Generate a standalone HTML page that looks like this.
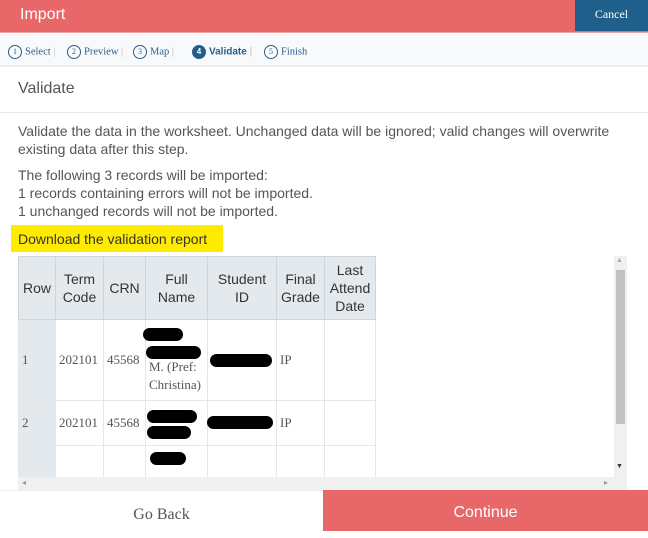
<!DOCTYPE html>
<html><head><meta charset="utf-8"><style>
*{margin:0;padding:0;box-sizing:border-box}
body{width:648px;height:531px;overflow:hidden;background:#fff;font-family:"Liberation Sans",sans-serif;position:relative;color:#555}
.abs{position:absolute}
.hdr{left:0;top:0;width:648px;height:33px;background:#e8686a;border-bottom:1px solid #f0a0a0}
.hdr .t{left:20px;top:6px;color:#fff;font-size:16px}
.cancel{left:575px;top:0;width:73px;height:31px;background:#1f5f8b;color:#fff;font-family:"Liberation Serif",serif;font-size:12px;text-align:center;line-height:28px}
.steps{left:0;top:34px;width:648px;height:33px;background:#f8f9fa;border-bottom:2px solid #eceef0;font-family:"Liberation Serif",serif;font-size:10.5px;color:#2b5f8e}
.steps span{position:absolute;top:11px;white-space:nowrap}
.c{display:inline-block;width:14px;height:14px;border:1px solid #2b5f8e;border-radius:50%;text-align:center;line-height:12px;font-size:8px;vertical-align:middle;margin-right:3px}
.c.on{background:#1f5f8b;color:#fff;font-weight:bold}
.sep{color:#bbb}
.h2{left:18px;top:80px;font-size:16px;color:#555}
.line2{left:0;top:112px;width:648px;height:1px;background:#e8e8e8}
.p{left:18px;font-size:14px;line-height:18px;color:#555;white-space:nowrap}
.dl{left:11px;top:225px;width:212px;height:27px;background:#ffeb00}
table{position:absolute;left:18px;top:256px;border-collapse:collapse;font-size:14px}
th{background:#e3e9ed;border:1px solid #cfd6db;font-weight:normal;color:#333;line-height:18px;padding:0;text-align:center}
td{border:1px solid #e6e6e6;font-family:"Liberation Serif",serif;font-size:13px;color:#555;vertical-align:middle;padding:0 3px;white-space:nowrap}
td.r{background:#e3e9ed}
.blk{position:absolute;background:#000;border-radius:8px}
.foot{top:490px;height:41px}
</style></head><body>
<div class="abs hdr"><div class="abs t">Import</div></div>
<div class="abs cancel">Cancel</div>
<div class="abs steps">
<span style="left:8px"><i class="c" style="font-style:normal">1</i>Select <b class="sep" style="font-weight:normal">|</b></span>
<span style="left:67px"><i class="c" style="font-style:normal">2</i>Preview <b class="sep" style="font-weight:normal">|</b></span>
<span style="left:133px"><i class="c" style="font-style:normal">3</i>Map <b class="sep" style="font-weight:normal">|</b></span>
<span style="left:192px;font-family:'Liberation Sans',sans-serif;font-weight:bold;font-size:10px"><i class="c on" style="font-style:normal">4</i>Validate <b class="sep" style="font-weight:normal">|</b></span>
<span style="left:264px"><i class="c" style="font-style:normal">5</i>Finish</span>
</div>
<div class="abs h2">Validate</div>
<div class="abs line2"></div>
<div class="abs p" style="top:122px">Validate the data in the worksheet. Unchanged data will be ignored; valid changes will overwrite<br>existing data after this step.</div>
<div class="abs p" style="top:166px">The following 3 records will be imported:<br>1 records containing errors will not be imported.<br>1 unchanged records will not be imported.</div>
<div class="abs dl"></div>
<div class="abs p" style="top:230px;color:#333">Download the validation report</div>
<table>
<tr style="height:63px"><th style="width:37px">Row</th><th style="width:48px">Term<br>Code</th><th style="width:42px">CRN</th><th style="width:62px">Full<br>Name</th><th style="width:69px">Student<br>ID</th><th style="width:48px">Final<br>Grade</th><th style="width:51px">Last<br>Attend<br>Date</th></tr>
<tr style="height:81px"><td class="r">1</td><td>202101</td><td>45568</td><td style="vertical-align:bottom;padding-bottom:6px;line-height:18px"><br><br>M. (Pref:<br>Christina)</td><td></td><td>IP</td><td></td></tr>
<tr style="height:45px"><td class="r">2</td><td>202101</td><td>45568</td><td></td><td></td><td>IP</td><td></td></tr>
<tr style="height:32px"><td class="r"></td><td></td><td></td><td></td><td></td><td></td><td></td></tr>
</table>
<div class="abs" style="left:0;top:477px;width:648px;height:13px;background:#fff"></div>
<div class="abs" style="left:18px;top:477px;width:596px;height:13px;background:#f0f0f0"></div>
<div class="abs" style="left:22px;top:478px;font-size:8px;color:#999">◂</div>
<div class="abs" style="left:604px;top:478px;font-size:8px;color:#999">▸</div>
<div class="abs" style="left:614px;top:256px;width:13px;height:234px;background:#f0f0f0"></div>
<div class="abs" style="left:616px;top:270px;width:9px;height:154px;background:#c1c1c1"></div>
<div class="abs" style="left:616px;top:257px;font-size:7px;color:#aaa">▲</div>
<div class="abs" style="left:616px;top:463px;font-size:7px;color:#333">▼</div>
<div class="blk" style="left:143px;top:328px;width:40px;height:13px"></div>
<div class="blk" style="left:146px;top:346px;width:55px;height:13px"></div>
<div class="blk" style="left:210px;top:354px;width:62px;height:13px"></div>
<div class="blk" style="left:147px;top:410px;width:50px;height:13px"></div>
<div class="blk" style="left:147px;top:426px;width:44px;height:13px"></div>
<div class="blk" style="left:207px;top:416px;width:66px;height:13px"></div>
<div class="blk" style="left:150px;top:452px;width:36px;height:13px"></div>
<div class="abs foot" style="left:0;width:323px;background:#fff;border-top:1px solid #eee;font-family:'Liberation Serif',serif;font-size:16px;color:#555;text-align:center;line-height:47px">Go Back</div>
<div class="abs foot" style="left:323px;width:325px;background:#e8686a;color:#fff;font-size:16px;text-align:center;line-height:45px">Continue</div>
</body></html>
